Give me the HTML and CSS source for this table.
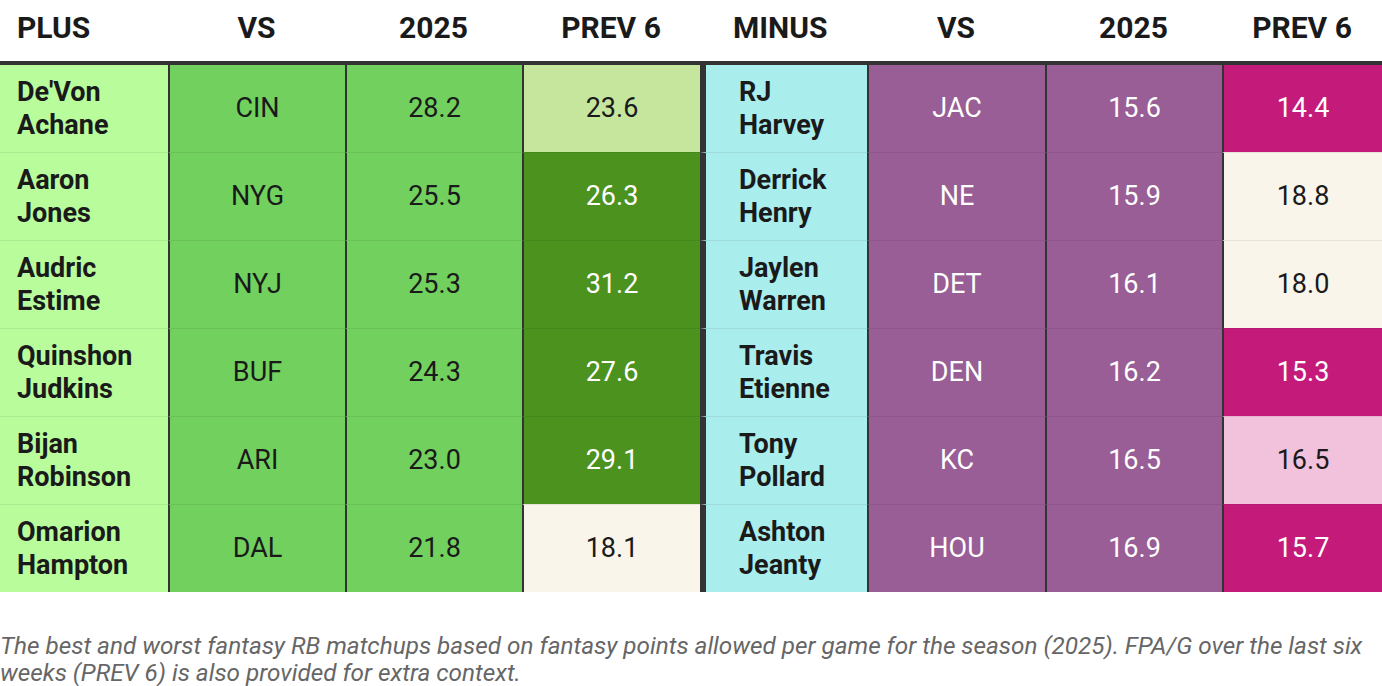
FILE: index.html
```html
<!DOCTYPE html>
<html lang="en">
<head>
<meta charset="utf-8">
<title>RB Matchups</title>
<link rel="stylesheet" href="styles.css">
</head>
<body>
<div class="table">
  <div class="row head">
    <div class="cell name">PLUS</div>
    <div class="cell">VS</div>
    <div class="cell">2025</div>
    <div class="cell">PREV 6</div>
    <div class="cell name minus">MINUS</div>
    <div class="cell">VS</div>
    <div class="cell">2025</div>
    <div class="cell">PREV 6</div>
  </div>

  <div class="row">
    <div class="cell name plus-name">De'Von<br>Achane</div>
    <div class="cell g-mid">CIN</div>
    <div class="cell g-mid">28.2</div>
    <div class="cell g-light">23.6</div>
    <div class="cell name minus minus-name">RJ<br>Harvey</div>
    <div class="cell purple">JAC</div>
    <div class="cell purple">15.6</div>
    <div class="cell magenta">14.4</div>
  </div>

  <div class="row">
    <div class="cell name plus-name">Aaron<br>Jones</div>
    <div class="cell g-mid">NYG</div>
    <div class="cell g-mid">25.5</div>
    <div class="cell g-dark">26.3</div>
    <div class="cell name minus minus-name">Derrick<br>Henry</div>
    <div class="cell purple">NE</div>
    <div class="cell purple">15.9</div>
    <div class="cell cream">18.8</div>
  </div>

  <div class="row">
    <div class="cell name plus-name">Audric<br>Estime</div>
    <div class="cell g-mid">NYJ</div>
    <div class="cell g-mid">25.3</div>
    <div class="cell g-dark">31.2</div>
    <div class="cell name minus minus-name">Jaylen<br>Warren</div>
    <div class="cell purple">DET</div>
    <div class="cell purple">16.1</div>
    <div class="cell cream">18.0</div>
  </div>

  <div class="row">
    <div class="cell name plus-name">Quinshon<br>Judkins</div>
    <div class="cell g-mid">BUF</div>
    <div class="cell g-mid">24.3</div>
    <div class="cell g-dark">27.6</div>
    <div class="cell name minus minus-name">Travis<br>Etienne</div>
    <div class="cell purple">DEN</div>
    <div class="cell purple">16.2</div>
    <div class="cell magenta">15.3</div>
  </div>

  <div class="row">
    <div class="cell name plus-name">Bijan<br>Robinson</div>
    <div class="cell g-mid">ARI</div>
    <div class="cell g-mid">23.0</div>
    <div class="cell g-dark">29.1</div>
    <div class="cell name minus minus-name">Tony<br>Pollard</div>
    <div class="cell purple">KC</div>
    <div class="cell purple">16.5</div>
    <div class="cell pink">16.5</div>
  </div>

  <div class="row">
    <div class="cell name plus-name">Omarion<br>Hampton</div>
    <div class="cell g-mid">DAL</div>
    <div class="cell g-mid">21.8</div>
    <div class="cell cream">18.1</div>
    <div class="cell name minus minus-name">Ashton<br>Jeanty</div>
    <div class="cell purple">HOU</div>
    <div class="cell purple">16.9</div>
    <div class="cell magenta">15.7</div>
  </div>
</div>

<p class="caption">The best and worst fantasy RB matchups based on fantasy points allowed per game for the season (2025). FPA/G over the last six weeks (PREV 6) is also provided for extra context.</p>
</body>
</html>
```

FILE: styles.css
```css
* {
  box-sizing: border-box;
}

html, body {
  margin: 0;
  padding: 0;
  background: #ffffff;
}

body {
  font-family: Roboto, "Liberation Sans", sans-serif;
  color: #1a1a1a;
  width: 1382px;
}

.table {
  display: flex;
  flex-direction: column;
}

.row {
  display: grid;
  grid-template-columns: 168px 177px 177px 178px 167px 178px 177px 1fr;
  height: 88px;
}

.row .cell {
  border-top: 1px solid rgba(0, 0, 0, 0.07);
}

.row:nth-child(2) {
  height: 87px;
}

.row:nth-child(2) .cell {
  border-top: none;
}

.row.head {
  height: 65px;
  border-bottom: 4px solid #333333;
}

.row.head .cell {
  font-weight: 700;
  font-size: 30px;
  border-left: none;
  border-top: none;
  padding-bottom: 6px;
}

.row.head .cell.name {
  padding-left: 17px;
}

.row.head .cell.name.minus {
  border-left: none;
  padding-left: 33px;
}

.cell {
  display: flex;
  align-items: center;
  justify-content: center;
  text-align: center;
  font-size: 27px;
  border-left: 2px solid #333333;
  line-height: 33px;
}

.cell.name {
  justify-content: flex-start;
  text-align: left;
  border-left: none;
  padding-left: 17px;
  font-weight: 700;
  font-size: 27px;
}

.cell.name.minus {
  border-left: 6px solid #333333;
  padding-left: 33px;
}

.plus-name {
  background: #b9fc9c;
}

.minus-name {
  background: #aaeded;
}

.g-mid {
  background: #72d05e;
}

.g-light {
  background: #c6e69e;
}

.g-dark {
  background: #4b921f;
  color: #ffffff;
}

.cream {
  background: #f9f5ea;
}

.purple {
  background: #985e95;
  color: #ffffff;
}

.magenta {
  background: #c41b7a;
  color: #ffffff;
}

.pink {
  background: #f2c2dc;
}

.caption {
  margin: 40px 0 0 0;
  font-style: italic;
  font-size: 24.3px;
  line-height: 27px;
  color: #666666;
}
```
